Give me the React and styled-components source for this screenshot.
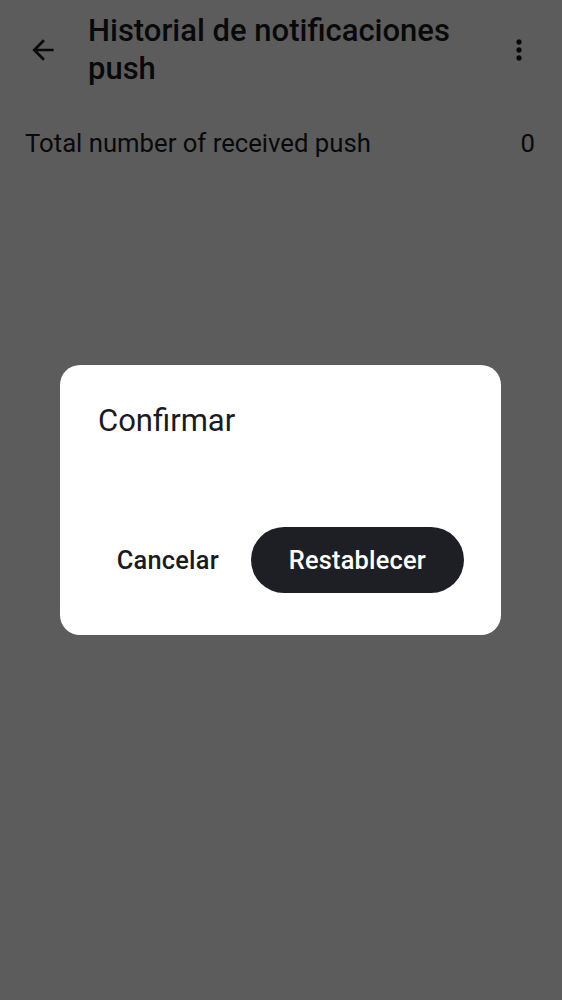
import React from 'react';
import styled, { createGlobalStyle } from 'styled-components';

const GlobalStyle = createGlobalStyle`
	html, body {
		margin: 0;
		padding: 0;
		background: #ffffff;
		font-family: Roboto, 'Noto Sans', sans-serif;
	}
`;

const Screen = styled.div`
	position: relative;
	width: 562px;
	height: 1000px;
	overflow: hidden;
	background: #ffffff;
	color: #1b1b1f;
`;

const TopBar = styled.header`
	display: flex;
	align-items: flex-start;
	padding: 12px 21px 0 21px;
`;

const IconButton = styled.button`
	flex: 0 0 auto;
	display: flex;
	align-items: center;
	justify-content: center;
	width: 44px;
	height: 44px;
	margin-top: 16px;
	padding: 0;
	border: 0;
	background: none;
	color: #1b1b1f;
`;

const Title = styled.h1`
	flex: 1;
	margin: 0 0 0 23px;
	font-size: 31px;
	font-weight: 500;
	line-height: 38px;
	letter-spacing: 0;
`;

const StatRow = styled.div`
	display: flex;
	justify-content: space-between;
	align-items: center;
	padding: 40px 27px 0 25px;
	font-size: 25.7px;
	line-height: 30px;
`;

const Scrim = styled.div`
	position: absolute;
	inset: 0;
	display: flex;
	align-items: flex-start;
	justify-content: flex-start;
	padding: 365px 0 0 60px;
	background: rgba(0, 0, 0, 0.64);
`;

const Dialog = styled.div`
	width: 441px;
	height: 270px;
	box-sizing: border-box;
	padding: 38px 37px 42px 38px;
	display: flex;
	flex-direction: column;
	justify-content: space-between;
	background: #ffffff;
	border-radius: 20px;
`;

const DialogTitle = styled.h2`
	margin: 0;
	font-size: 31px;
	font-weight: 400;
	line-height: 36px;
	color: #1b1b1f;
`;

const Actions = styled.div`
	display: flex;
	justify-content: flex-end;
	align-items: center;
	gap: 14px;
`;

const Button = styled.button`
	height: 66px;
	padding: 0 ${p => (p.filled ? '38px' : '18px')};
	border: 0;
	border-radius: 33px;
	font-family: Roboto, 'Noto Sans', sans-serif;
	font-size: 25.4px;
	font-weight: 500;
	letter-spacing: 0.2px;
	background: ${p => (p.filled ? '#1e1f24' : 'transparent')};
	color: ${p => (p.filled ? '#ffffff' : '#1b1b1f')};
`;

const App = () => (
	<Screen>
		<GlobalStyle />
		<TopBar>
			<IconButton aria-label="back">
				<svg width="32" height="32" viewBox="0 0 24 24" fill="currentColor">
					<path d="M20 11H7.83l5.59-5.59L12 4l-8 8 8 8 1.41-1.41L7.83 13H20v-2z" />
				</svg>
			</IconButton>
			<Title>Historial de notificaciones push</Title>
			<IconButton aria-label="more">
				<svg width="32" height="32" viewBox="0 0 24 24" fill="currentColor">
					<path d="M12 8c1.1 0 2-.9 2-2s-.9-2-2-2-2 .9-2 2 .9 2 2 2zm0 2c-1.1 0-2 .9-2 2s.9 2 2 2 2-.9 2-2-.9-2-2-2zm0 6c-1.1 0-2 .9-2 2s.9 2 2 2 2-.9 2-2-.9-2-2-2z" />
				</svg>
			</IconButton>
		</TopBar>
		<StatRow>
			<span>Total number of received push</span>
			<span>0</span>
		</StatRow>

		<Scrim>
			<Dialog>
				<DialogTitle>Confirmar</DialogTitle>
				<Actions>
					<Button>Cancelar</Button>
					<Button filled>Restablecer</Button>
				</Actions>
			</Dialog>
		</Scrim>
	</Screen>
);

export default App;
